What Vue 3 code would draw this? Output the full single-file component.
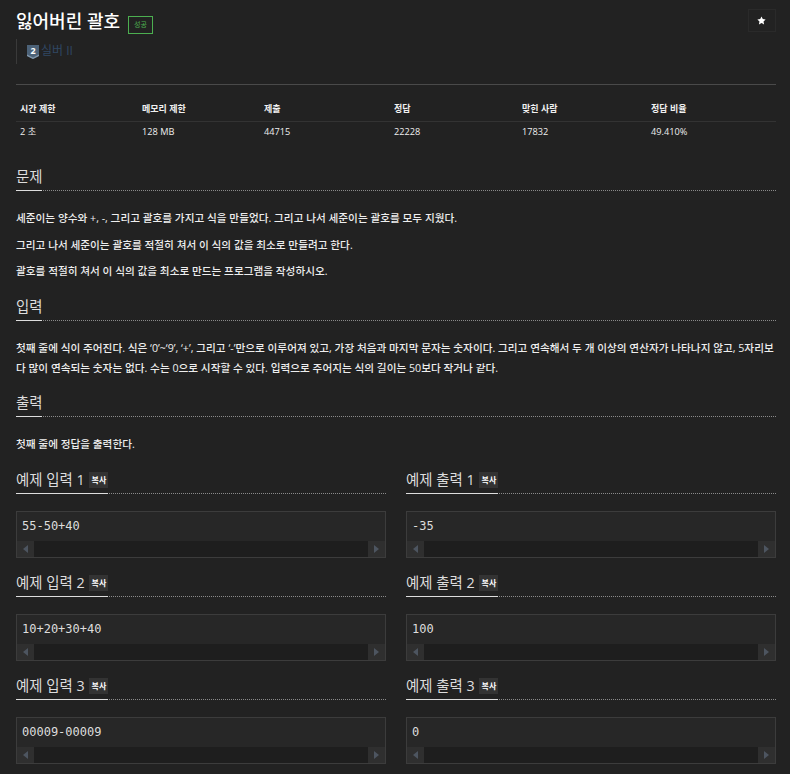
<script setup>
const stats = [
  { label: '시간 제한', value: '2 초', width: '122px' },
  { label: '메모리 제한', value: '128 MB', width: '122px' },
  { label: '제출', value: '44715', width: '130px' },
  { label: '정답', value: '22228', width: '128px' },
  { label: '맞힌 사람', value: '17832', width: '129px' },
  { label: '정답 비율', value: '49.410%', width: '129px' },
]

const samples = [
  { n: 1, input: '55-50+40', output: '-35' },
  { n: 2, input: '10+20+30+40', output: '100' },
  { n: 3, input: '00009-00009', output: '0' },
]
</script>

<template>
  <div class="page">
    <header class="top">
      <div class="title-wrap">
        <h1 class="title">잃어버린 괄호</h1>
        <span class="badge">성공</span>
      </div>
      <button class="star-btn" aria-label="즐겨찾기">
        <svg width="9" height="9" viewBox="0 0 24 24"><path fill="#fff" d="M12 1l3.4 7.2 7.6 1-5.6 5.4 1.5 7.8L12 18.600l-6.900 3.800 1.500-7.800L1 9.200l7.600-1z" /></svg>
      </button>
    </header>

    <div class="tier">
      <svg class="tier-icon" width="12" height="14" viewBox="0 0 12 14">
        <path fill="#4c6278" d="M0 0h12v11L6 14 0 11z" />
        <path fill="#8096aa" d="M0 9.500l6 3 6-3V11l-6 3-6-3z" />
        <text x="6" y="9.300" text-anchor="middle" class="tier-num">2</text>
      </svg>
      <span class="tier-name">실버 II</span>
    </div>

    <hr class="rule" />

    <div class="stats">
      <div v-for="s in stats" :key="s.label" class="stat" :style="{ width: s.width }">
        <div class="stat-label">{{ s.label }}</div>
        <div class="stat-value">{{ s.value }}</div>
      </div>
    </div>

    <section class="sec first">
      <h2 class="head"><span class="head-text">문제</span></h2>
      <p>세준이는 양수와 +, -, 그리고 괄호를 가지고 식을 만들었다. 그리고 나서 세준이는 괄호를 모두 지웠다.</p>
      <p>그리고 나서 세준이는 괄호를 적절히 쳐서 이 식의 값을 최소로 만들려고 한다.</p>
      <p>괄호를 적절히 쳐서 이 식의 값을 최소로 만드는 프로그램을 작성하시오.</p>
    </section>

    <section class="sec">
      <h2 class="head"><span class="head-text">입력</span></h2>
      <p class="wrap">첫째 줄에 식이 주어진다. 식은 ‘0’~‘9’, ‘+’, 그리고 ‘-’만으로 이루어져 있고, 가장 처음과 마지막 문자는 숫자이다. 그리고 연속해서 두 개 이상의 연산자가 나타나지 않고, 5자리보다 많이 연속되는 숫자는 없다. 수는 0으로 시작할 수 있다. 입력으로 주어지는 식의 길이는 50보다 작거나 같다.</p>
    </section>

    <section class="sec">
      <h2 class="head"><span class="head-text">출력</span></h2>
      <p>첫째 줄에 정답을 출력한다.</p>
    </section>

    <div class="samples">
      <template v-for="s in samples" :key="s.n">
        <div class="sample">
          <h2 class="head"><span class="head-text">예제 입력 {{ s.n }} <span class="copy">복사</span></span></h2>
          <div class="code">
            <pre>{{ s.input }}</pre>
            <div class="scroll">
              <span class="arrow"><i class="tri left"></i></span>
              <span class="track"></span>
              <span class="arrow"><i class="tri right"></i></span>
            </div>
          </div>
        </div>
        <div class="sample">
          <h2 class="head"><span class="head-text">예제 출력 {{ s.n }} <span class="copy">복사</span></span></h2>
          <div class="code">
            <pre>{{ s.output }}</pre>
            <div class="scroll">
              <span class="arrow"><i class="tri left"></i></span>
              <span class="track"></span>
              <span class="arrow"><i class="tri right"></i></span>
            </div>
          </div>
        </div>
      </template>
    </div>
  </div>
</template>

<style>
html,
body {
  margin: 0;
  background: #222;
  overflow: hidden;
}
</style>

<style scoped>
.page {
  height: 774px;
  overflow: hidden;
  box-sizing: border-box;
  padding: 0 14px 0 16px;
  background: #222;
  color: #e6e6e6;
  font-family: "Open Sans", "Noto Sans CJK KR", sans-serif;
  font-size: 10px;
}

.top {
  display: flex;
  justify-content: space-between;
  align-items: flex-start;
  padding-top: 9px;
}

.title-wrap {
  display: flex;
  align-items: flex-start;
  gap: 8px;
}

.title {
  margin: -1px 0 0;
  font-size: 18px;
  font-weight: 500;
  line-height: 26px;
  color: #fff;
}

.badge {
  margin-top: 7px;
  width: 25px;
  height: 18px;
  box-sizing: border-box;
  border: 1px solid #4caf50;
  color: #4caf50;
  font-size: 7px;
  line-height: 16px;
  text-align: center;
}

.star-btn {
  width: 28px;
  height: 23px;
  padding: 0 1px 0 0;
  display: flex;
  align-items: center;
  justify-content: center;
  background: transparent;
  border: 1px solid #2a2a2a;
}

.tier {
  display: flex;
  align-items: flex-start;
  gap: 2px;
  height: 25px;
  margin-top: 5px;
  padding-left: 10px;
  border-left: 1px solid #3a3a3a;
}

.tier-icon {
  margin-top: 6px;
  overflow: visible;
}

.tier-num {
  font-family: "Open Sans", sans-serif;
  font-size: 9px;
  font-weight: 700;
  fill: #fff;
}

.tier-name {
  margin-top: 2px;
  font-size: 12px;
  color: #304763;
}

.rule {
  margin: 20px 0 0;
  border: 0;
  border-top: 1px solid #4a4a4a;
}

.stats {
  display: flex;
  margin-top: 14px;
}

.stat-label {
  padding: 0 4px;
  height: 22px;
  line-height: 19px;
  font-weight: 700;
  font-size: 9px;
  color: #f0f0f0;
  border-bottom: 1px solid #333;
}

.stat-value {
  padding: 0 4px;
  line-height: 20px;
  font-size: 9.200px;
  color: #eee;
}

.sec {
  margin-top: 15.500px;
}

.sec.first {
  margin-top: 25px;
}

.head {
  margin: 0;
  height: 23px;
  font-size: 14.400px;
  font-weight: 400;
  line-height: 19px;
  color: #ddd;
  border-bottom: 1px dotted #8a8a8a;
}

.head-text {
  display: inline-block;
  height: 23px;
  border-bottom: 1px solid #ddd;
  box-sizing: content-box;
}

.sec p {
  margin: 0;
  font-weight: 500;
  font-size: 10.650px;
  line-height: 20px;
  color: #eee;
  padding-top: 6.500px;
}

.sec p:first-of-type {
  padding-top: 17px;
}

.samples {
  display: grid;
  grid-template-columns: 370px 370px;
  column-gap: 20px;
  row-gap: 15px;
  margin-top: 16px;
}

.copy {
  display: inline-block;
  height: 16px;
  width: 19px;
  margin-left: 1px;
  background: #333;
  color: #fff;
  font-size: 8px;
  font-weight: 700;
  line-height: 16px;
  text-align: center;
  vertical-align: top;
  margin-top: 2px;
}

.code {
  margin-top: 17px;
  height: 47px;
  box-sizing: border-box;
  border: 1px solid #3c3c3c;
  background: #272727;
  display: flex;
  flex-direction: column;
}

.code pre {
  flex: 1;
  margin: 0;
  padding: 0 5px;
  font-family: "DejaVu Sans Mono", monospace;
  font-size: 12px;
  line-height: 29px;
  color: #ddd;
}

.scroll {
  display: flex;
  height: 17px;
}

.arrow {
  width: 17px;
  display: flex;
  align-items: center;
  justify-content: center;
  background: #2f2f2f;
}

.track {
  flex: 1;
  background: #1e1e1e;
}

.tri {
  width: 0;
  height: 0;
  border-top: 4px solid transparent;
  border-bottom: 4px solid transparent;
}

.tri.left {
  border-right: 5px solid #4d5560;
}

.tri.right {
  border-left: 5px solid #4d5560;
}
</style>
